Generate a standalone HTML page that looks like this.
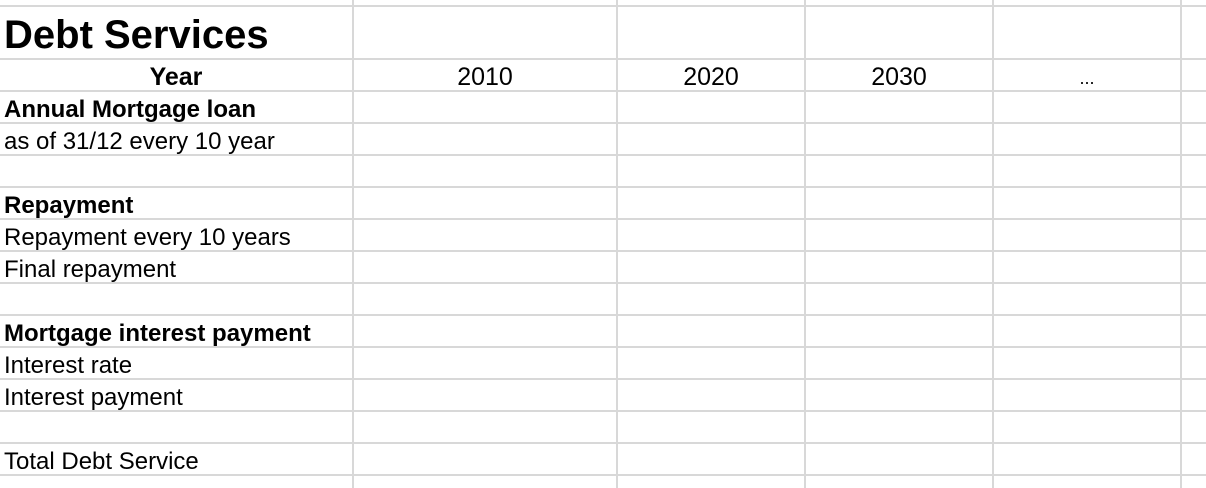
<!DOCTYPE html>
<html><head><style>
html,body{margin:0;padding:0;background:#fff;width:1206px;height:488px;overflow:hidden;position:relative;font-family:"Liberation Sans",Arial,sans-serif;color:#000}
.h{position:absolute;left:0;width:1206px;height:2px;background:#d8d8d8}
.v{position:absolute;top:0;height:488px;width:2px;background:#d8d8d8}
.t{position:absolute;font-size:24px;line-height:32px;white-space:nowrap;left:4px}
.b{font-weight:bold}
.c{position:absolute;font-size:25px;line-height:32px;text-align:center}
</style></head><body>
<div class="h" style="top:5px"></div>
<div class="h" style="top:58px"></div>
<div class="h" style="top:90px"></div>
<div class="h" style="top:122px"></div>
<div class="h" style="top:154px"></div>
<div class="h" style="top:186px"></div>
<div class="h" style="top:218px"></div>
<div class="h" style="top:250px"></div>
<div class="h" style="top:282px"></div>
<div class="h" style="top:314px"></div>
<div class="h" style="top:346px"></div>
<div class="h" style="top:378px"></div>
<div class="h" style="top:410px"></div>
<div class="h" style="top:442px"></div>
<div class="h" style="top:474px"></div>
<div class="v" style="left:352px"></div>
<div class="v" style="left:616px"></div>
<div class="v" style="left:804px"></div>
<div class="v" style="left:992px"></div>
<div class="v" style="left:1180px"></div>
<div style="position:absolute;left:0;top:7px;width:352px;height:51px;background:#fff"></div>
<div class="t b" style="top:12px;font-size:40px;line-height:46px">Debt Services</div>
<div class="c b" style="left:0;width:352px;top:61px">Year</div>
<div class="c" style="left:354px;width:262px;top:61px">2010</div>
<div class="c" style="left:618px;width:186px;top:61px">2020</div>
<div class="c" style="left:806px;width:186px;top:61px">2030</div>
<div class="c" style="left:994px;width:186px;top:62px;font-size:18px">...</div>
<div class="t b" style="top:94px">Annual Mortgage loan</div>
<div class="t" style="top:126px">as of 31/12 every 10 year</div>
<div class="t b" style="top:190px">Repayment</div>
<div class="t" style="top:222px">Repayment every 10 years</div>
<div class="t" style="top:254px">Final repayment</div>
<div class="t b" style="top:318px">Mortgage interest payment</div>
<div class="t" style="top:350px">Interest rate</div>
<div class="t" style="top:382px">Interest payment</div>
<div class="t" style="top:446px">Total Debt Service</div>
</body></html>
